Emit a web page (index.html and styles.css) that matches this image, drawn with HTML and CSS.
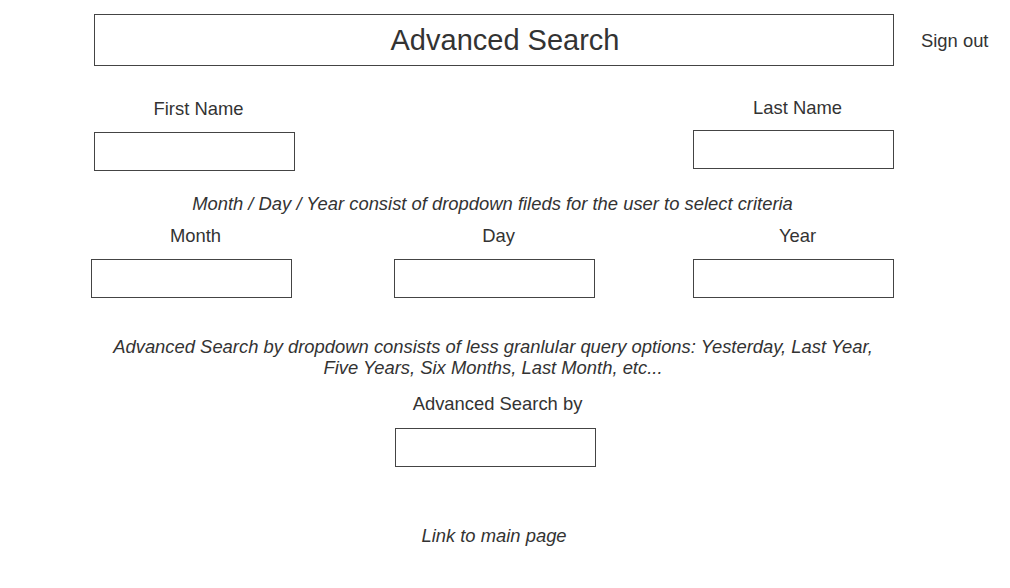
FILE: index.html
```html
<!DOCTYPE html>
<html>
<head>
<meta charset="utf-8">
<link rel="stylesheet" href="styles.css">
</head>
<body>
<div class="page">
  <div class="header">
    <div class="title-box">Advanced Search</div>
    <div class="signout">Sign out</div>
  </div>
  <div class="main">
    <div class="names">
      <div class="field first">
        <div class="label">First Name</div>
        <div class="box"></div>
      </div>
      <div class="field last">
        <div class="label">Last Name</div>
        <div class="box"></div>
      </div>
    </div>
    <div class="note">Month / Day / Year consist of dropdown fileds for the user to select criteria</div>
    <div class="dates">
      <div class="field month">
        <div class="label">Month</div>
        <div class="box"></div>
      </div>
      <div class="field day">
        <div class="label">Day</div>
        <div class="box"></div>
      </div>
      <div class="field year">
        <div class="label">Year</div>
        <div class="box"></div>
      </div>
    </div>
    <div class="para">Advanced Search by dropdown consists of less granlular query options: Yesterday, Last Year,<br>Five Years, Six Months, Last Month, etc...</div>
    <div class="field adv">
      <div class="label small-shift">Advanced Search by</div>
      <div class="box"></div>
    </div>
    <div class="link">Link to main page</div>
  </div>
</div>
</body>
</html>
```
FILE: styles.css
```css
html, body {
  margin: 0;
  padding: 0;
  background: #fff;
}
body {
  font-family: "Liberation Sans", Arial, sans-serif;
  font-size: 18.4px;
  line-height: 21px;
  color: #333;
}
.page {
  width: 1010px;
}
.header {
  display: flex;
  align-items: center;
  padding-top: 14px;
  margin-left: 94px;
}
.title-box {
  width: 800px;
  height: 52px;
  box-sizing: border-box;
  border: 1px solid #444;
  display: flex;
  align-items: center;
  justify-content: center;
  padding-left: 22px;
  font-size: 29px;
  line-height: 32px;
}
.signout {
  margin-left: 27px;
  margin-top: 1px;
}
.main {
  margin-left: 94px;
  width: 800px;
}
.field {
  display: flex;
  flex-direction: column;
  align-items: center;
  width: 201px;
}
.label {
  padding-left: 8px;
  white-space: nowrap;
}
.box {
  width: 201px;
  height: 39px;
  box-sizing: border-box;
  border: 1px solid #444;
}
.names {
  display: flex;
  justify-content: space-between;
  align-items: flex-start;
  margin-top: 31px;
}
.first {
  padding-top: 1px;
  gap: 13px;
}
.last {
  gap: 12px;
}
.note {
  margin-top: 22px;
  padding-right: 3px;
  text-align: center;
  font-style: italic;
}
.dates {
  display: flex;
  margin-top: 11px;
}
.dates .field {
  gap: 13px;
}
.month {
  margin-left: -3px;
}
.day {
  margin-left: 102px;
}
.year {
  margin-left: 98px;
}
.para {
  margin-top: 38px;
  padding-right: 2px;
  text-align: center;
  font-style: italic;
}
.adv {
  margin-top: 15px;
  margin-left: 301px;
  gap: 14px;
}
.small-shift {
  padding-left: 4px;
}
.link {
  margin-top: 58px;
  text-align: center;
  font-style: italic;
}
```
